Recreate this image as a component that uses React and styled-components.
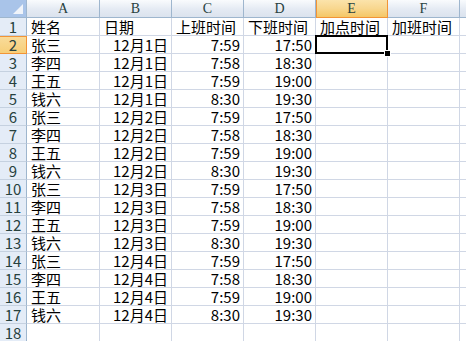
import styled, { createGlobalStyle, css } from "styled-components";

const GlobalStyle = createGlobalStyle`
  html, body {
    margin: 0;
    padding: 0;
    background: #ffffff;
    overflow: hidden;
  }
`;

// G only peeks in at the right edge, its letter is out of view
const COLS = ["A", "B", "C", "D", "E", "F", ""];
const NAMES = ["张三", "李四", "王五", "钱六"];
const TIME_IN = ["7:59", "7:58", "7:59", "8:30"];
const TIME_OUT = ["17:50", "18:30", "19:00", "19:30"];
const HEAD = ["姓名", "日期", "上班时间", "下班时间", "加点时间", "加班时间", ""];

const buildRows = () => {
  const rows = [HEAD.map((t) => ({ text: t }))];
  for (let i = 0; i < 16; i++) {
    const k = i % 4;
    const day = Math.floor(i / 4) + 1;
    rows.push([
      { text: NAMES[k] },
      { text: `12月${day}日`, right: true },
      { text: TIME_IN[k], right: true },
      { text: TIME_OUT[k], right: true },
      { text: "" },
      { text: "" },
      { text: "" },
    ]);
  }
  rows.push(COLS.map(() => ({ text: "" })));
  return rows;
};

const Viewport = styled.div`
  width: 466px;
  height: 341px;
  overflow: hidden;
`;

const Sheet = styled.div`
  display: grid;
  grid-template-columns: 27px 73px repeat(6, 72px);
  grid-auto-rows: 18px;
  width: max-content;
  font-family: "Noto Sans CJK SC", "Noto Sans", sans-serif;
  font-size: 15px;
  line-height: 17px;
  color: #000000;
`;

const Corner = styled.div`
  position: relative;
  box-sizing: border-box;
  background: #a9c4e9;
  border-right: 1px solid #9eb6ce;
  border-bottom: 1px solid #9eb6ce;

  &::after {
    content: "";
    position: absolute;
    right: 3px;
    bottom: 3px;
    width: 0;
    height: 0;
    border-left: 10px solid transparent;
    border-bottom: 10px solid #f0f4fa;
  }
`;

const ColHead = styled.div`
  box-sizing: border-box;
  display: flex;
  align-items: center;
  justify-content: center;
  font-family: "Liberation Serif", "DejaVu Serif", serif;
  font-size: 14px;
  color: #27413e;
  background: linear-gradient(#f9fbfd, #e4eaf3 55%, #dbe3ee);
  border-right: 1px solid #9eb6ce;
  border-bottom: 1px solid #9eb6ce;

  ${(p) =>
    p.$active &&
    css`
      background: linear-gradient(#fbe3ab, #f8d78f 50%, #f5c766);
      border-right-color: #f29436;
      border-bottom-color: #f29436;
      box-shadow: inset 1px 0 0 #f29436;
    `}
`;

const RowHead = styled.div`
  box-sizing: border-box;
  display: flex;
  align-items: center;
  justify-content: center;
  color: #27413e;
  background: #e4ecf7;
  border-right: 1px solid #9eb6ce;
  border-bottom: 1px solid #c5d1e0;

  ${(p) =>
    p.$active &&
    css`
      background: linear-gradient(#f9dc9c, #f7cf79);
      border-right-color: #f29436;
      border-bottom-color: #f29436;
      box-shadow: inset 0 1px 0 #f29436;
    `}
`;

const Cell = styled.div`
  position: relative;
  box-sizing: border-box;
  display: flex;
  align-items: center;
  justify-content: ${(p) => (p.$right ? "flex-end" : "flex-start")};
  padding: 0 3px 0 4px;
  white-space: nowrap;
  border-right: 1px solid #d0d7e5;
  border-bottom: 1px solid #d0d7e5;

  ${(p) =>
    p.$selected &&
    css`
      &::before {
        content: "";
        position: absolute;
        left: -1px;
        top: -1px;
        right: -1px;
        bottom: -1px;
        border: 2px solid #000000;
        z-index: 2;
      }
      &::after {
        content: "";
        position: absolute;
        right: -3px;
        bottom: -3px;
        width: 5px;
        height: 5px;
        background: #000000;
        box-shadow: 0 0 0 1px #ffffff;
        z-index: 3;
      }
    `}
`;

export default function App() {
  const rows = buildRows();
  return (
    <>
      <GlobalStyle />
      <Viewport>
        <Sheet>
          <Corner />
          {COLS.map((c, i) => (
            <ColHead key={i} $active={c === "E"}>
              {c}
            </ColHead>
          ))}
          {rows.map((row, r) => [
            <RowHead key={`h${r}`} $active={r === 1}>
              {r + 1}
            </RowHead>,
            ...row.map((cell, c) => (
              <Cell
                key={`${r}-${c}`}
                $right={cell.right}
                $selected={r === 1 && c === 4}
              >
                {cell.text}
              </Cell>
            )),
          ])}
        </Sheet>
      </Viewport>
    </>
  );
}
